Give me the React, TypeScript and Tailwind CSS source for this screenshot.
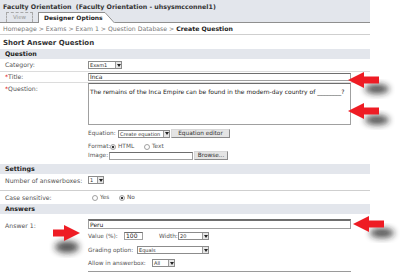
import React from 'react'

const F = "font-['DejaVu_Sans',Verdana,sans-serif]"

function Select({ label, className = '' }: { label: string; className?: string }) {
  return (
    <div className={`flex shrink-0 items-stretch h-[8px] border border-[#8c8c8c] bg-white ${className}`}>
      <span className="flex-1 pl-[1px] text-[5px] leading-[6px] text-[#333] overflow-hidden whitespace-nowrap">{label}</span>
      <span className="w-[6px] border-l border-[#9a9a9a] bg-[#e6e6e6] flex items-center justify-center">
        <svg width="4" height="3" viewBox="0 0 4 3">
          <polygon points="0,0 4,0 2,3" fill="#222" />
        </svg>
      </span>
    </div>
  )
}

function Input({ value = '', className = '' }: { value?: string; className?: string }) {
  return (
    <div className={`shrink-0 h-[8px] border border-[#a0a0a0] border-t-[#6e6e6e] bg-white pl-[1px] text-[6px] leading-[6px] text-[#222] whitespace-nowrap overflow-hidden ${className}`}>
      {value}
    </div>
  )
}

function Button({ label, className = '' }: { label: string; className?: string }) {
  return (
    <div className={`shrink-0 h-[9px] border border-[#8a8a8a] border-t-[#d8d8d8] border-l-[#d8d8d8] bg-[#e4e4e4] text-center text-[5.8px] leading-[7px] text-[#333] whitespace-nowrap ${className}`}>
      {label}
    </div>
  )
}

function Radio({ checked }: { checked?: boolean }) {
  return (
    <svg width="6" height="6" viewBox="0 0 6 6" className="shrink-0">
      <circle cx="3" cy="3" r="2.5" fill="#fff" stroke="#8a8a8a" strokeWidth="0.8" />
      {checked && <circle cx="3" cy="3" r="1.2" fill="#333" />}
    </svg>
  )
}

function Band({ title, className = '' }: { title: string; className?: string }) {
  return (
    <div className={`bg-[#e3e6ec] pl-[5px] flex items-center text-[6.3px] font-bold text-[#222] ${className}`}>
      {title}
    </div>
  )
}

function Label({ children }: { children: React.ReactNode }) {
  return <div className="w-[88px] shrink-0 pl-[5px] text-[6.2px] text-[#555] whitespace-nowrap">{children}</div>
}

function Text({ w, children }: { w: string; children: React.ReactNode }) {
  return <span className={`${w} shrink-0 whitespace-nowrap`}>{children}</span>
}

function Arrow({ id, dir, className }: { id: string; dir: 'left' | 'right'; className: string }) {
  const left = dir === 'left'
  return (
    <svg width="48" height="34" viewBox="0 0 48 34" className={`absolute ${className}`}>
      <defs>
        <filter id={id} x="-50%" y="-50%" width="200%" height="200%">
          <feGaussianBlur stdDeviation="3" />
        </filter>
      </defs>
      {left ? (
        <>
          <ellipse cx="30" cy="18" rx="12" ry="5" fill="#1a1a1a" opacity="0.75" filter={`url(#${id})`} />
          <polygon points="1,9 17,1 17,5.5 32,5.5 32,12.5 17,12.5 17,17" fill="#ee1c24" />
        </>
      ) : (
        <>
          <ellipse cx="18" cy="23" rx="12" ry="6" fill="#1a1a1a" opacity="0.75" filter={`url(#${id})`} />
          <polygon points="31,9 15,1 15,5.5 4,5.5 4,12.5 15,12.5 15,17" fill="#ee1c24" />
        </>
      )}
    </svg>
  )
}

export default function App() {
  return (
    <div className={`relative w-[404px] h-[272px] overflow-hidden bg-white ${F}`}>
      <div className="w-[370px]">
        {/* Header */}
        <div className="bg-[#e3e6ec] h-[23px] border-b border-[#8f8f8f] flex flex-col">
          <div className="pl-[3px] pt-[3px] h-[11px] text-[6.3px] leading-[7px] font-bold text-[#333] whitespace-nowrap">
            Faculty Orientation&nbsp;&nbsp;(Faculty Orientation - uhsysmcconnel1)
          </div>
          <div className="flex items-end h-[11px] mt-auto">
            <div className="ml-[6px] w-[27px] h-[10px] border border-b-0 border-dashed border-[#a8a8a8] text-[5.5px] leading-[9px] text-[#999] text-center">
              View
            </div>
            <div className="ml-[5px] flex items-end h-[11px] -mb-px">
              <div className="h-[11px] bg-white border-l border-t border-[#8f8f8f] pl-[5px] pr-[2px] text-[6px] leading-[10px] font-bold text-[#222] whitespace-nowrap">
                Designer Options
              </div>
              <svg width="10" height="11" viewBox="0 0 10 11" className="block">
                <polygon points="0,0 0,11 10,11" fill="#fff" />
                <line x1="0" y1="0.5" x2="9.5" y2="11" stroke="#8f8f8f" strokeWidth="1" />
              </svg>
            </div>
          </div>
        </div>

        {/* Breadcrumb */}
        <div className="h-[12px] border-b border-[#cfcfcf] pl-[3px] flex items-center text-[6.2px] text-[#777] whitespace-nowrap">
          Homepage &gt; Exams &gt; Exam 1 &gt; Question Database &gt;&nbsp;<span className="font-bold text-[#222]">Create Question</span>
        </div>

        <div className="h-[14px] pl-[3px] pt-[4px] text-[7px] leading-[8px] font-bold text-[#333]">Short Answer Question</div>

        {/* Question */}
        <Band title="Question" className="h-[10px]" />
        <div className="h-[13px] border-b border-[#dcdcdc] flex items-center">
          <Label>Category:</Label>
          <Select label="Exam1" className="w-[34px]" />
        </div>
        <div className="h-[11px] border-b border-[#dcdcdc] flex items-center">
          <Label><span className="text-[#d00]">*</span>Title:</Label>
          <Input value="Inca" className="w-[263px]" />
        </div>
        <div className="h-[81px] flex">
          <Label><div className="pt-[1px]"><span className="text-[#d00]">*</span>Question:</div></Label>
          <div className="flex flex-col">
            <div className="h-[42px] w-[263px] border border-[#a0a0a0] border-t-[#6e6e6e] pl-[1px] pt-[4px] text-[6px] leading-[7px] text-[#222] whitespace-nowrap overflow-hidden">
              The remains of the Inca Empire can be found in the modern-day country of ________?
            </div>
            <div className="flex items-center mt-[4px] h-[9px] text-[5.8px] text-[#555]">
              <Text w="w-[30px]">Equation:</Text>
              <Select label="Create equation" className="w-[52px]" />
              <Button label="Equation editor" className="ml-[1px] w-[59px]" />
            </div>
            <div className="flex items-center mt-[5px] h-[7px] text-[5.8px] text-[#555]">
              <Text w="w-[22px]">Format:</Text>
              <Radio checked />
              <span className="ml-[2px] w-[26px] whitespace-nowrap">HTML</span>
              <Radio />
              <span className="ml-[2px] whitespace-nowrap">Text</span>
            </div>
            <div className="flex items-center mt-[1px] h-[9px] text-[5.8px] text-[#555]">
              <Text w="w-[21px]">Image:</Text>
              <Input className="w-[84px]" />
              <Button label="Browse..." className="ml-[1px] w-[34px]" />
            </div>
          </div>
        </div>

        {/* Settings */}
        <Band title="Settings" className="h-[10px]" />
        <div className="h-[17px] border-b border-[#cfcfcf] flex items-start pt-[2px]">
          <Label>Number of answerboxes:</Label>
          <Select label="1" className="w-[16px]" />
        </div>
        <div className="h-[13px] flex items-center text-[5.8px] text-[#555]">
          <Label>Case sensitive:</Label>
          <span className="ml-[4px]"><Radio /></span>
          <span className="ml-[2px] w-[19px] whitespace-nowrap">Yes</span>
          <Radio checked />
          <span className="ml-[2px] whitespace-nowrap">No</span>
        </div>

        {/* Answers */}
        <Band title="Answers" className="h-[10px]" />
        <div className="flex pt-[5px]">
          <Label><div className="pt-[2px]">Answer 1:</div></Label>
          <div className="flex flex-col text-[5.8px] text-[#555]">
            <Input value="Peru" className="w-[263px] h-[10px] leading-[8px] border-t-2" />
            <div className="flex items-center mt-[3px] h-[8px]">
              <Text w="w-[36px]">Value (%):</Text>
              <Input value="100" className="w-[19px]" />
              <span className="ml-[16px] w-[19px] shrink-0 whitespace-nowrap">Width:</span>
              <Select label="20" className="w-[31px]" />
            </div>
            <div className="flex items-center mt-[6px] h-[8px]">
              <Text w="w-[49px]">Grading option:</Text>
              <Select label="Equals" className="w-[72px]" />
            </div>
            <div className="flex items-center mt-[5px] h-[8px]">
              <Text w="w-[64px]">Allow in answerbox:</Text>
              <Select label="All" className="w-[23px]" />
            </div>
            <div className="mt-[4px] w-[263px] border-t-2 border-[#9a9a9a]" />
          </div>
        </div>
      </div>

      <Arrow id="a1" dir="left" className="left-[347px] top-[71px]" />
      <Arrow id="a2" dir="left" className="left-[347px] top-[102px]" />
      <Arrow id="a3" dir="left" className="left-[352px] top-[215px]" />
      <Arrow id="a4" dir="right" className="left-[49px] top-[224px]" />
    </div>
  )
}
